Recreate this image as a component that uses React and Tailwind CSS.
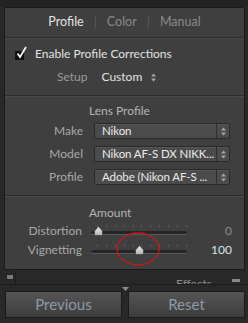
import React from 'react';

const font = { fontFamily: 'Lato, "Open Sans", "Liberation Sans", sans-serif' };

function Stepper() {
  return (
    <svg width="7" height="9" viewBox="0 0 7 9" className="block">
      <path d="M3.5 0.5 L6 3.5 L1 3.5 Z" fill="#a8a8a8" />
      <path d="M3.5 8.5 L6 5.5 L1 5.5 Z" fill="#a8a8a8" />
    </svg>
  );
}

function SelectRow({ label, value }) {
  return (
    <div className="flex items-center h-[16px]">
      <div className="w-[78px] text-right text-[12px] text-[#a9a9a9]">{label}</div>
      <div className="ml-[11px] flex h-[16px] w-[136px] items-center rounded-[2px] border border-[#2a2a2a] bg-[#4b4b4b] shadow-[inset_0_1px_0_#565656]">
        <div className="flex-1 whitespace-nowrap pl-[7px] text-[11.5px] leading-[14px] tracking-[-0.1px] text-[#ebebeb]">{value}</div>
        <div className="flex h-full w-[13px] items-center justify-center border-l border-[#2e2e2e]">
          <Stepper />
        </div>
      </div>
    </div>
  );
}

function Slider({ label, value, pos, bright }) {
  const ticks = [0, 1, 2, 3, 4, 5, 6, 7, 8, 9, 10];
  return (
    <div className="flex items-center h-[18px]">
      <div className="w-[77px] text-right text-[12px] text-[#a9a9a9]">{label}</div>
      <div className="relative ml-[9px] h-[18px] w-[96px]">
        <div className="absolute left-[6px] right-0 top-[3px] flex justify-between">
          {ticks.map((t) => (
            <div key={t} className="h-[3px] w-px bg-[#555]" />
          ))}
        </div>
        <div className="absolute left-0 right-0 top-[9px] h-[3px] rounded-full bg-[#262626] shadow-[0_1px_0_#595959]" />
        <svg width="11" height="10" viewBox="0 0 11 10" className="absolute top-[4px]" style={{ left: pos - 5 }}>
          <defs>
            <linearGradient id={`k${label}`} x1="0" y1="0" x2="0" y2="1">
              <stop offset="0" stopColor="#f0f0f0" />
              <stop offset="1" stopColor="#b0b0b0" />
            </linearGradient>
          </defs>
          <path d="M5.5 0.5 L9.5 5 L9.5 8.5 Q9.5 9.5 8.5 9.5 L2.5 9.5 Q1.5 9.5 1.5 8.5 L1.5 5 Z" fill={`url(#k${label})`} stroke="#333" strokeWidth="0.6" />
        </svg>
      </div>
      <div className={`w-[45px] text-right text-[12px] ${bright ? 'text-[#d6e2ec]' : 'text-[#8c8c8c]'}`}>{value}</div>
    </div>
  );
}

export default function App() {
  return (
    <div className="relative h-[323px] w-[248px] overflow-hidden bg-[#282828]" style={font}>
      <div className="h-[7px] bg-[#232323]" />
      <div className="ml-[4px] w-[241px] border border-[#1a1a1a] bg-[#3f3f3f]">
        <div className="flex h-[30px] items-center justify-center border-b border-[#2c2c2c] text-[12.5px]">
          <span className="text-[#e4e4e4]">Profile</span>
          <span className="mx-[10px] text-[#5c5c5c]">|</span>
          <span className="text-[#8a8a8a]">Color</span>
          <span className="mx-[10px] text-[#5c5c5c]">|</span>
          <span className="text-[#8a8a8a]">Manual</span>
        </div>
        <div className="border-t border-[#4a4a4a] pb-[9px]">
          <div className="flex h-[24px] items-end pl-[10px]">
            <div className="relative mb-[3px] h-[9px] w-[9px] border border-[#111] bg-[#0c0c0c]">
              <svg width="12" height="13" viewBox="0 0 12 13" className="absolute -top-[6px] left-0">
                <path d="M1.5 7.5 L4 11 L10 1" fill="none" stroke="#f2f2f2" strokeWidth="1.8" />
              </svg>
            </div>
            <span className="ml-[11px] text-[12px] leading-[18px] text-[#e2e2e2]">Enable Profile Corrections</span>
          </div>
          <div className="mt-[5px] flex h-[18px] items-center">
            <span className="ml-[52px] text-[12px] text-[#9a9a9a]">Setup</span>
            <span className="ml-[14px] text-[12px] text-[#e2e2e2]">Custom</span>
            <span className="ml-[8px]"><Stepper /></span>
          </div>
        </div>
        <div className="border-t border-[#2c2c2c]">
          <div className="border-t border-[#4a4a4a] pb-[10px]">
            <div className="mt-[5px] pl-[84px] text-[12px] leading-[17px] text-[#b4b4b4]">Lens Profile</div>
            <div className="mt-[4px] flex flex-col gap-[7px]">
              <SelectRow label="Make" value="Nikon" />
              <SelectRow label="Model" value="Nikon AF-S DX NIKK..." />
              <SelectRow label="Profile" value="Adobe (Nikon AF-S ..." />
            </div>
          </div>
        </div>
        <div className="border-t border-[#2c2c2c]">
          <div className="border-t border-[#4a4a4a] pb-[10px]">
            <div className="mt-[7px] pl-[84px] text-[12px] leading-[17px] text-[#b4b4b4]">Amount</div>
            <div className="mt-[1px] flex flex-col gap-px">
              <Slider label="Distortion" value="0" pos={7} />
              <Slider label="Vignetting" value="100" pos={48} bright />
            </div>
          </div>
        </div>
      </div>
      <div className="relative flex h-[14px] items-center overflow-hidden">
        <div className="ml-[6px] h-[6px] w-[8px] border border-[#222] bg-[#7a7a7a]" />
        <div className="ml-[1px] h-[14px] w-px bg-[#1c1c1c]" />
        <span className="absolute left-[176px] top-[8px] text-[12px] leading-none text-[#8a8a8a]">Effects</span>
        <div className="absolute right-[8px] top-[9px] h-[3px] w-[8px] bg-[#888]" />
      </div>
      <div className="relative h-[7px] border-t border-[#1c1c1c]">
        <svg width="7" height="4" viewBox="0 0 7 4" className="absolute left-[122px] top-[2px]">
          <path d="M0 0 L7 0 L3.5 4 Z" fill="#8a8a8a" />
        </svg>
      </div>
      <div className="flex gap-[6px] pl-[5px]">
        <button className="h-[27px] w-[117px] border border-[#1a1a1a] bg-gradient-to-b from-[#555] to-[#3d3d3d] text-[15px] text-[#8d9aa6]">Previous</button>
        <button className="h-[27px] w-[117px] border border-[#1a1a1a] bg-gradient-to-b from-[#555] to-[#3d3d3d] text-[15px] text-[#8d9aa6]">Reset</button>
      </div>
      <svg width="46" height="36" className="absolute left-[115px] top-[231px]" viewBox="0 0 46 36">
        <ellipse cx="23" cy="18" rx="21" ry="16" fill="none" stroke="#c41a1a" strokeWidth="1.3" />
      </svg>
    </div>
  );
}
